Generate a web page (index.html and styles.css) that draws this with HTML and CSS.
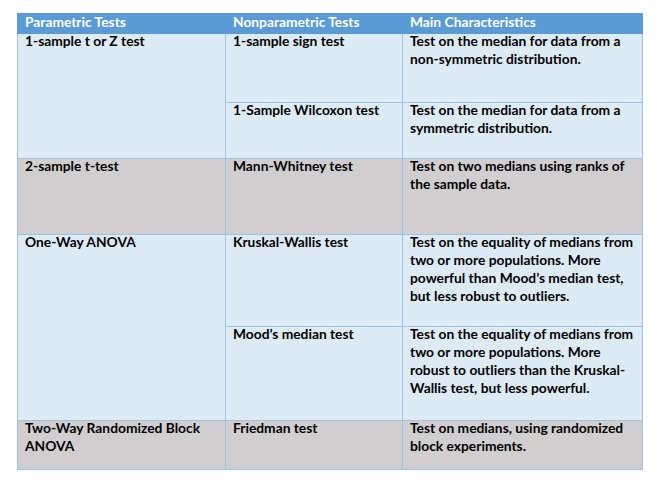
FILE: index.html
```html
<!DOCTYPE html>
<html lang="en">
<head>
<meta charset="utf-8">
<title>Parametric vs Nonparametric Tests</title>
<link rel="stylesheet" href="styles.css">
</head>
<body>
<div class="page">
  <table class="tests">
    <colgroup>
      <col class="c1">
      <col class="c2">
      <col class="c3">
    </colgroup>
    <thead>
      <tr class="head">
        <th><div class="txt">Parametric Tests</div></th>
        <th><div class="txt">Nonparametric Tests</div></th>
        <th><div class="txt">Main Characteristics</div></th>
      </tr>
    </thead>
    <tbody>
      <tr class="blue h69">
        <td rowspan="2"><div class="txt">1-sample t or Z test</div></td>
        <td><div class="txt">1-sample sign test</div></td>
        <td><div class="txt">Test on the median for data from a<br>non-symmetric distribution.</div></td>
      </tr>
      <tr class="blue h56">
        <td><div class="txt">1-Sample Wilcoxon test</div></td>
        <td><div class="txt">Test on the median for data from a<br>symmetric distribution.</div></td>
      </tr>
      <tr class="grey h76">
        <td><div class="txt">2-sample t-test</div></td>
        <td><div class="txt">Mann-Whitney test</div></td>
        <td><div class="txt">Test on two medians using ranks of<br>the sample data.</div></td>
      </tr>
      <tr class="blue h92">
        <td rowspan="2"><div class="txt">One-Way ANOVA</div></td>
        <td><div class="txt">Kruskal-Wallis test</div></td>
        <td><div class="txt">Test on the equality of medians from<br>two or more populations. More<br>powerful than Mood’s median test,<br>but less robust to outliers.</div></td>
      </tr>
      <tr class="blue h94">
        <td><div class="txt">Mood’s median test</div></td>
        <td><div class="txt">Test on the equality of medians from<br>two or more populations. More<br>robust to outliers than the Kruskal-<br>Wallis test, but less powerful.</div></td>
      </tr>
      <tr class="grey h49">
        <td><div class="txt">Two-Way Randomized Block<br>ANOVA</div></td>
        <td><div class="txt">Friedman test</div></td>
        <td><div class="txt">Test on medians, using randomized<br>block experiments.</div></td>
      </tr>
    </tbody>
  </table>
</div>
</body>
</html>
```

FILE: styles.css
```css
html, body {
  margin: 0;
  padding: 0;
  background: #ffffff;
}

.page {
  padding: 13px 0 0 17px;
}

.tests {
  border-collapse: collapse;
  table-layout: fixed;
  width: 625px;
  font-family: Lato, "Liberation Sans", Arial, sans-serif;
  font-weight: bold;
  font-size: 13.8px;
  line-height: 18px;
  color: #000000;
}

.c1 { width: 208px; }
.c2 { width: 177px; }
.c3 { width: 240px; }

.tests th,
.tests td {
  border: 1px solid #9dc3e6;
  padding: 0 7px;
  text-align: left;
  vertical-align: top;
  white-space: nowrap;
  box-sizing: border-box;
}

.txt {
  margin-top: -2px;
}

.head th {
  background: #5b9bd5;
  color: #ffffff;
  border-color: #5b9bd5;
  height: 20px;
}

.head .txt {
  margin-top: -1px;
}

.blue td { background: #ddebf7; }
.grey td { background: #d0cece; }

.h69 td { height: 69px; }
.h56 td { height: 56px; }
.h76 td { height: 76px; }
.h92 td { height: 92px; }
.h94 td { height: 94px; }
.h49 td { height: 49px; }
```
